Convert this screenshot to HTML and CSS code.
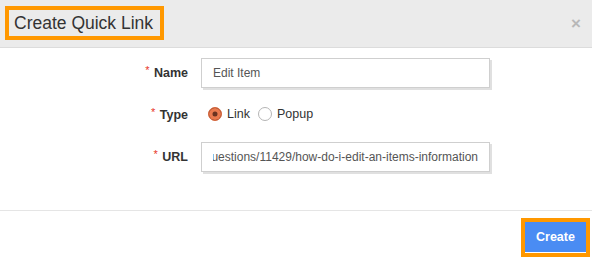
FILE: index.html
```html
<!DOCTYPE html>
<html lang="en">
<head>
  <meta charset="UTF-8">
  <meta name="viewport" content="width=device-width, initial-scale=1.0">
  <title>Create Quick Link</title>
  <link rel="stylesheet" href="styles.css">
</head>
<body>
  <div class="modal">
    <!-- Header -->
    <div class="modal-header">
      <h4 class="modal-title highlight">Create Quick Link</h4>
      <button type="button" class="close">&times;</button>
    </div>

    <!-- Form body -->
    <form class="modal-body" id="quick-link-form">
      <label class="form-label" for="name"><span class="req">*</span> Name</label>
      <input type="text" id="name" class="form-control" value="Edit Item">

      <span class="form-label"><span class="req">*</span> Type</span>
      <div class="radio-group">
        <label class="radio"><input type="radio" name="type" value="link" checked> Link</label>
        <label class="radio"><input type="radio" name="type" value="popup"> Popup</label>
      </div>

      <label class="form-label" for="url"><span class="req">*</span> URL</label>
      <input type="text" id="url" class="form-control url-input" value="https://www.zoho.com/inventory/help/questions/11429/how-do-i-edit-an-items-information">
    </form>

    <!-- Footer -->
    <div class="modal-footer">
      <button type="submit" form="quick-link-form" class="btn highlight">Create</button>
    </div>
  </div>
</body>
</html>
```

FILE: styles.css
```css
body {
  font-family: "Liberation Sans", Arial, sans-serif;
  background-color: #fff;
  color: #333;
  margin: 0;
}

.modal {
  width: 592px;
}

.highlight {
  outline: 4px solid #ff9800;
}

.modal-header {
  height: 47px;
  background: #ebebeb;
  border-bottom: 1px solid #dcdcdc;
  display: flex;
  align-items: center;
  justify-content: space-between;
  padding: 0 11px 0 9px;
  box-sizing: content-box;
}

.modal-title {
  margin: 0 0 1px 0;
  height: 26px;
  line-height: 26px;
  padding: 0 7px 0 5px;
  font-size: 17.5px;
  font-weight: normal;
  color: #333;
}

.close {
  background: none;
  border: none;
  padding: 0;
  font-family: "Liberation Sans", Arial, sans-serif;
  font-size: 17px;
  font-weight: bold;
  color: #b8b8b8;
  cursor: pointer;
}

.modal-body {
  display: grid;
  grid-template-columns: 188px 289px;
  column-gap: 13px;
  row-gap: 12px;
  align-items: center;
  padding: 10px 0 38px 0;
  margin: 0;
  border-bottom: 1px solid #e5e5e5;
}

.form-label {
  justify-self: end;
  font-size: 12.5px;
  font-weight: bold;
  color: #333;
  margin-top: -2px;
}

.req {
  color: #e8352a;
  font-weight: normal;
  font-size: 11px;
  vertical-align: 3px;
  margin-right: 1px;
}

.form-control {
  height: 30px;
  box-sizing: border-box;
  border: 1px solid #cfcfcf;
  box-shadow: 2px 2px 0 #e0e0e0;
  padding: 0 11px;
  font-family: "Liberation Sans", Arial, sans-serif;
  font-size: 12px;
  color: #555;
  background: #fff;
}

.url-input {
  direction: rtl;
  text-align: left;
}

.radio-group {
  height: 30px;
  box-sizing: border-box;
  display: flex;
  align-items: center;
  gap: 8px;
  padding: 0 0 3px 7px;
}

.radio {
  display: flex;
  align-items: center;
  gap: 5px;
  font-size: 12.5px;
  color: #333;
}

.radio input {
  appearance: none;
  -webkit-appearance: none;
  width: 14px;
  height: 14px;
  margin: 0;
  border-radius: 50%;
  border: 1px solid #b5b5b5;
  background: #fff;
  box-sizing: border-box;
}

.radio input:checked {
  border-color: #d9673c;
  background: #6b3320;
  box-shadow: inset 0 0 0 3.5px #ea7a4e;
}

.modal-footer {
  display: flex;
  justify-content: flex-end;
  padding: 11px 6px 8px 0;
}

.btn {
  background-color: #4a8cf3;
  color: white;
  font-family: "Liberation Sans", Arial, sans-serif;
  font-size: 12.5px;
  font-weight: bold;
  width: 61px;
  height: 31px;
  border: none;
  border-bottom: 1px solid #fff;
  cursor: pointer;
  padding: 0;
}
```
